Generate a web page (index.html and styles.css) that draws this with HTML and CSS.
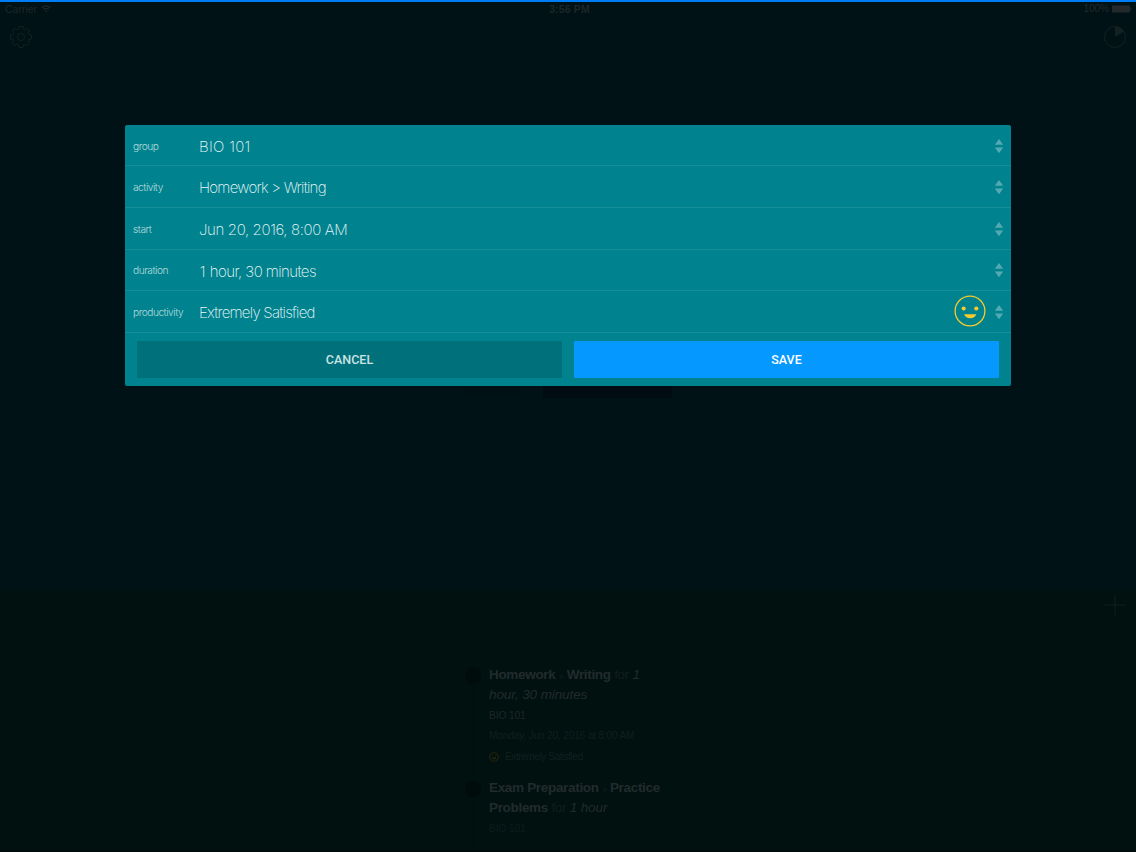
FILE: index.html
```html
<!DOCTYPE html>
<html lang="en">
<head>
<meta charset="utf-8">
<title>Edit activity</title>
<link rel="stylesheet" href="styles.css">
</head>
<body>
<div class="app">
  <section class="timer">
    <header class="status">
      <div class="carrier">Carrier
        <svg width="10" height="8" viewBox="0 0 10 8" fill="none" stroke="currentColor" stroke-width="1.3"><path d="M.6 2.8Q5-.9 9.4 2.8M2.3 4.6Q5 2.3 7.7 4.6"/><path d="M3.7 5.7Q5 4.7 6.3 5.7L5 7.5Z" fill="currentColor" stroke="none"/></svg>
      </div>
      <div class="clock">3:56 PM</div>
      <div class="battery">100%
        <svg width="21" height="8" viewBox="0 0 21 8" fill="currentColor"><rect x="0" y=".5" width="18" height="7" rx="1"/><path d="M18.7 2.3q2 1.7 0 3.4z"/></svg>
      </div>
    </header>
    <nav class="tools">
      <svg width="24" height="24" viewBox="0 0 24 24" fill="none" stroke="currentColor" stroke-width="1"><path d="M10 1.5h4l.6 2.8 1.5.6 2.4-1.5 2.1 2.1-1.5 2.4.6 1.5 2.8.6v4l-2.8.6-.6 1.5 1.5 2.4-2.1 2.1-2.4-1.5-1.5.6-.6 2.8h-4l-.6-2.8-1.5-.6-2.4 1.5-2.1-2.1 1.5-2.4-.6-1.5-2.8-.6v-4l2.8-.6.6-1.5-1.5-2.4 2.1-2.1 2.4 1.5 1.5-.6z" stroke-linejoin="round"/><circle cx="12" cy="12" r="3.6"/></svg>
      <svg width="24" height="24" viewBox="0 0 24 24" fill="none" stroke="currentColor" stroke-width="1"><circle cx="12" cy="12" r="10.5"/><path d="M12 12V1.5A10.5 10.5 0 0 1 21 6.8Z" fill="currentColor" stroke="none"/></svg>
    </nav>
    <div class="timer-buttons"><i class="tb-left"></i><i class="tb-right"></i></div>
  </section>
  <section class="history">
    <svg class="plus" width="22" height="22" viewBox="0 0 22 22" stroke="currentColor" stroke-width="1"><path d="M11 .5v21M.5 11h21"/></svg>
    <div class="timeline">
      <article class="entry">
        <i class="dot"></i>
        <h3><b>Homework</b> <small>&gt;</small> <b>Writing</b> <span>for</span> <em>1<br>hour, 30 minutes</em></h3>
        <p class="course">BIO 101</p>
        <p class="date">Monday, Jun 20, 2016 at 8:00 AM</p>
        <p class="mood"><svg width="10" height="10" viewBox="0 0 10 10" fill="none" stroke="currentColor"><circle cx="5" cy="5" r="4.3"/><path d="M3.3 3.6h.8M6 3.6h.8M3 6h4Q5 8 3 6"/></svg><span>Extremely Satisfied</span></p>
      </article>
      <article class="entry">
        <i class="dot"></i>
        <h3><b>Exam Preparation</b> <small>&gt;</small> <b>Practice<br>Problems</b> <span>for</span> <em>1 hour</em></h3>
        <p class="course faded">BIO 101</p>
      </article>
    </div>
  </section>
</div>
<form class="dialog">
  <div class="row"><label>group</label><output class="loose">BIO 101</output><svg class="sort" width="10" height="16" viewBox="0 0 10 16"><path d="M.8 6.8 5 1l4.2 5.8zM.8 9.4h8.4L5 15.2z"/></svg></div>
  <div class="row"><label>activity</label><output class="tight">Homework &gt; Writing</output><svg class="sort" width="10" height="16" viewBox="0 0 10 16"><path d="M.8 6.8 5 1l4.2 5.8zM.8 9.4h8.4L5 15.2z"/></svg></div>
  <div class="row"><label>start</label><output>Jun 20, 2016, 8:00 AM</output><svg class="sort" width="10" height="16" viewBox="0 0 10 16"><path d="M.8 6.8 5 1l4.2 5.8zM.8 9.4h8.4L5 15.2z"/></svg></div>
  <div class="row"><label>duration</label><output class="duration"><span>1</span> hour, 30 minutes</output><svg class="sort" width="10" height="16" viewBox="0 0 10 16"><path d="M.8 6.8 5 1l4.2 5.8zM.8 9.4h8.4L5 15.2z"/></svg></div>
  <div class="row"><label>productivity</label><output class="tight">Extremely Satisfied</output>
    <svg class="smile" width="32" height="32" viewBox="0 0 32 32"><circle cx="16" cy="16" r="14.9" fill="none" stroke="#f6cb2e" stroke-width="1.3"/><g fill="#f6cb2e"><circle cx="9.7" cy="13.5" r="2.1"/><circle cx="22.3" cy="13.5" r="2.1"/><path d="M10 19.2h12.4q-1.8 4-6.2 4t-6.2-4z"/></g></svg>
    <svg class="sort" width="10" height="16" viewBox="0 0 10 16"><path d="M.8 6.8 5 1l4.2 5.8zM.8 9.4h8.4L5 15.2z"/></svg></div>
  <div class="actions"><button type="button" class="cancel">CANCEL</button><button type="button" class="save">SAVE</button></div>
</form>
</body>
</html>
```
FILE: styles.css
```css
* { box-sizing: border-box; }
body { margin: 0; width: 1136px; height: 852px; overflow: hidden; font-family: "Liberation Sans", Arial, sans-serif; background: #001216; }
svg { display: block; flex: none; }
.app { height: 852px; display: flex; flex-direction: column; }
.timer { height: 591px; border-top: 2px solid #007df5; background: #001216; color: #1d2628; }
.status { display: grid; grid-template-columns: 1fr 1fr 1fr; height: 14px; padding: 0 5px 1px; align-items: center; font-size: 10.5px; line-height: 12px; }
.carrier, .battery { display: flex; align-items: center; gap: 4px; }
.battery { justify-content: flex-end; gap: 3px; margin-right: -2px; color: #23282a; font-size: 10px; }
.clock { text-align: center; font-weight: 700; font-size: 10.5px; padding-left: 3px; letter-spacing: .15px; }
.tools { display: flex; justify-content: space-between; padding: 9px 9px 0; color: #142022; }
.timer-buttons { display: flex; margin-top: 311px; padding-left: 464px; }
.timer-buttons i { height: 38px; }
.tb-left { width: 62px; background: #001115; margin-right: 17px; }
.tb-right { width: 129px; background: #000c11; }
.history { flex: 1; background: #001110; color: #222b2c; overflow: hidden; border-bottom: 1px solid #000909; }
.plus { margin: 3px 10px 0 auto; color: #13201f; }
.timeline { width: 210px; margin: 48px 0 0 465px; }
.entry { position: relative; height: 113px; padding-left: 24px; }
.entry::before { content: ""; position: absolute; left: 8px; top: 22px; width: 1px; height: 93px; background: #000e0e; }
.dot { position: absolute; left: 0; top: 4px; width: 16px; height: 16px; border-radius: 50%; background: #000b0c; }
h3, p { margin: 0; white-space: nowrap; }
h3 { font-size: 13.5px; line-height: 20px; font-weight: 400; letter-spacing: -.32px; padding-top: 1px; }
h3 small { font-size: 8px; line-height: 0; color: #162323; }
h3 span { color: #121e1e; }
h3 em { letter-spacing: -.1px; }
p { font-size: 10.2px; line-height: 20.4px; }
.course { margin-top: .5px; color: #1d2727; letter-spacing: -.1px; }
.faded { color: #0e1b1b; }
.date { color: #121f1f; letter-spacing: -.2px; }
.mood { display: flex; align-items: center; gap: 6px; color: #121f1f; letter-spacing: -.5px; }
.mood span { padding-top: 1px; }
.mood svg { color: #2b270a; }
.dialog { position: absolute; left: 125px; top: 125px; width: 886px; height: 261px; border-radius: 2px; background: #00838f; overflow: hidden; font-family: Inter, "Liberation Sans", sans-serif; }
.row { display: flex; align-items: center; height: 41.65px; padding: 1px 8px 0; border-bottom: 1px solid #168e98; color: #edf8f8; }
.row:first-child { height: 41.3px; }
.row label { width: 66px; font-size: 10.2px; font-weight: 300; color: #b5dadd; letter-spacing: -.48px; padding-top: 0; }
.row output { flex: 1; font-size: 15px; font-weight: 200; letter-spacing: -.37px; padding-top: 1.5px; white-space: nowrap; }
.row output.loose { letter-spacing: .3px; }
.row output.tight { letter-spacing: -.75px; }
.row output.duration { letter-spacing: -.57px; }
.duration span { padding: 0 1.2px 0 .8px; }
.sort { fill: #54a9b2; margin-right: -1px; }
.smile { margin: -2px 8px 0 0; }
.actions { display: grid; grid-template-columns: 1fr 1fr; gap: 12px; padding: 8.1px 12px 0; }
button { height: 37px; padding: 0; border: 0; border-radius: 1px; font: 500 12.5px Roboto, sans-serif; }
.cancel { background: #00717b; color: #cce3e5; }
.save { background: #0598ff; color: #fff; }
```
